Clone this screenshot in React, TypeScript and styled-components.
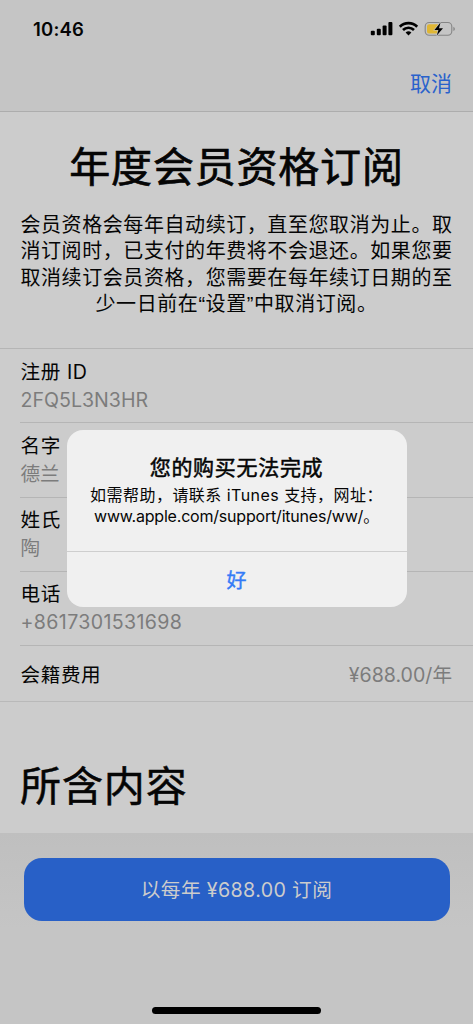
import React from 'react';
import styled, { createGlobalStyle } from 'styled-components';

const GlobalStyle = createGlobalStyle`
  *, *::before, *::after { box-sizing: border-box; }
  body {
    margin: 0;
    background: #cccccc;
    color: #050505;
    font-family: Inter, 'Noto Sans CJK SC', sans-serif;
    -webkit-font-smoothing: antialiased;
  }
  p, h1, h2, dl, dt, dd { margin: 0; font-weight: 400; }
  button { font: inherit; border: 0; padding: 0; background: none; }
`;

const Screen = styled.main`
  position: relative;
  width: 473px;
  height: 1024px;
  overflow: hidden;
  display: flex;
  flex-direction: column;
  background: #cccccc;
`;

const Header = styled.header`
  height: 112px;
  flex: none;
  background: #c5c5c5;
  border-bottom: 1px solid #adadad;
`;

const StatusBar = styled.div`
  display: flex;
  justify-content: space-between;
  align-items: center;
  height: 58px;
  padding: 0 17px 0 33px;
`;

const Clock = styled.span`
  font-size: 18.5px;
  font-weight: 600;
  letter-spacing: 0.2px;
`;

const StatusIcons = styled.svg`
  display: block;
  width: 86px;
  height: 18px;
`;

const NavBar = styled.nav`
  display: flex;
  justify-content: flex-end;
  align-items: center;
  height: 52px;
  padding-right: 21px;
`;

const CancelButton = styled.button`
  color: #2a62cc;
  font-size: 21px;
  line-height: 30px;
`;

const Intro = styled.section`
  height: 237px;
  flex: none;
  padding-top: 23px;
  text-align: center;
  border-bottom: 1px solid #b5b5b5;
`;

const Title = styled.h1`
  font-size: 41px;
  line-height: 64px;
  letter-spacing: 0.8px;
  -webkit-text-stroke: 0.7px currentColor;
`;

const Description = styled.p`
  margin-top: 12.5px;
  font-family: 'Liberation Sans', 'Noto Sans CJK SC', sans-serif;
  font-size: 20px;
  line-height: 26.5px;
  letter-spacing: 0.58px;
`;

const Line = styled.span`
  display: block;
  white-space: nowrap;
`;

const Details = styled.dl`
  flex: none;
  border-bottom: 1px solid #b9b9b9;
`;

const Row = styled.div<{ $inline?: boolean }>`
  display: flex;
  flex-direction: ${(p) => (p.$inline ? 'row' : 'column')};
  justify-content: ${(p) => (p.$inline ? 'space-between' : 'flex-start')};
  align-items: ${(p) => (p.$inline ? 'center' : 'flex-start')};
  height: ${(p) => (p.$inline ? '55px' : '74.3px')};
  margin-left: 20px;
  padding: ${(p) => (p.$inline ? '3px 21px 0 0.5px' : '8.5px 21px 0 0.5px')};
  border-bottom: ${(p) => (p.$inline ? '0' : '1px solid #b5b5b5')};
  font-size: 19.6px;
  line-height: 28px;
`;

const Label = styled.dt`
  letter-spacing: 0.6px;
`;

const Value = styled.dd<{ $spacing?: number }>`
  color: #7c7c7c;
  letter-spacing: ${(p) => p.$spacing ?? 0}px;
`;

const SectionTitle = styled.h2`
  flex: none;
  height: 130.5px;
  padding: 51.5px 20px 0;
  font-size: 41px;
  line-height: 64px;
  letter-spacing: 0.9px;
  -webkit-text-stroke: 0.5px currentColor;
`;

const Footer = styled.footer`
  flex: 1;
  display: flex;
  flex-direction: column;
  justify-content: space-between;
  align-items: center;
  padding: 25px 0 10px;
  background: linear-gradient(#bfbfbf, #c5c5c5 50%);
`;

const SubscribeButton = styled.button`
  width: 426px;
  height: 63px;
  padding-bottom: 2px;
  border-radius: 18px;
  background: #2860c7;
  color: #cccccc;
  font-size: 19.7px;
  letter-spacing: 0.35px;
`;

const HomeIndicator = styled.div`
  width: 169px;
  height: 7px;
  border-radius: 3.5px;
  background: #000000;
`;

const Overlay = styled.div`
  position: absolute;
  inset: 0;
  display: flex;
  justify-content: center;
  align-items: flex-start;
  padding-top: 430px;
`;

const Dialog = styled.div`
  width: 340px;
  height: 177px;
  display: flex;
  flex-direction: column;
  border-radius: 16px;
  overflow: hidden;
  background: #f0f0f0;
  text-align: center;
`;

const DialogBody = styled.div`
  flex: 1;
  padding-top: 24px;
`;

const DialogTitle = styled.h2`
  font-size: 21px;
  line-height: 28px;
  letter-spacing: 0.7px;
  -webkit-text-stroke: 0.5px currentColor;
`;

const DialogText = styled.p`
  margin-top: 3px;
  font-size: 16px;
  line-height: 20.6px;
`;

const MessageLine = styled(Line)`
  letter-spacing: 0.46px;
`;

const AddressLine = styled(Line)`
  letter-spacing: -0.2px;
`;

const DialogAction = styled.button`
  height: 56px;
  border-top: 1px solid #cecece;
  color: #347bf7;
  font-size: 20px;
  -webkit-text-stroke: 0.4px currentColor;
`;

const fields = [
  { label: '注册 ID', value: '2FQ5L3N3HR' },
  { label: '名字', value: '德兰' },
  { label: '姓氏', value: '陶' },
  { label: '电话', value: '+8617301531698', spacing: 0.36 },
];

const description = [
  '会员资格会每年自动续订，直至您取消为止。取',
  '消订阅时，已支付的年费将不会退还。如果您要',
  '取消续订会员资格，您需要在每年续订日期的至',
  '少一日前在“设置”中取消订阅。',
];

const StatusGlyphs = () => (
  <StatusIcons viewBox="0 0 86 18" aria-hidden="true">
    <g fill="#000">
      <rect x="0.8" y="10.7" width="4" height="4.6" rx="1" />
      <rect x="6.8" y="8.8" width="4" height="6.5" rx="1" />
      <rect x="12.6" y="5.5" width="4" height="9.8" rx="1" />
      <rect x="18.4" y="2" width="4" height="13.3" rx="1" />
    </g>
    <g fill="none" stroke="#000" strokeWidth="2.7">
      <path d="M29.8 6.7a12.4 12.4 0 0 1 17.4 0" />
      <path d="M33 10a7.9 7.9 0 0 1 11 0" />
    </g>
    <path d="M38.5 15.5l-2.9-2.9a4.1 4.1 0 0 1 5.8 0z" fill="#000" />
    <rect x="55.2" y="2.5" width="26.6" height="12.8" rx="4" fill="none" stroke="#858585" strokeWidth="1.1" />
    <path d="M83.4 6.7c2 .8 2 3.6 0 4.4z" fill="#858585" />
    <path d="M59.2 4.2H68v9.4h-8.8a2.2 2.2 0 0 1-2.2-2.2v-5a2.2 2.2 0 0 1 2.2-2.2z" fill="#dfb634" />
    <path
      d="M70.5 2.5L64.4 10h4l-1.6 5.6 6.2-7.4h-4z"
      fill="#000"
      stroke="#c5c5c5"
      strokeWidth="1.2"
      paintOrder="stroke"
    />
  </StatusIcons>
);

export default function App() {
  return (
    <>
      <GlobalStyle />
      <Screen>
        <Header>
          <StatusBar>
            <Clock>10:46</Clock>
            <StatusGlyphs />
          </StatusBar>
          <NavBar>
            <CancelButton>取消</CancelButton>
          </NavBar>
        </Header>
        <Intro>
          <Title>年度会员资格订阅</Title>
          <Description>
            {description.map((line) => (
              <Line key={line}>{line}</Line>
            ))}
          </Description>
        </Intro>
        <Details>
          {fields.map((field) => (
            <Row key={field.label}>
              <Label>{field.label}</Label>
              <Value $spacing={field.spacing}>{field.value}</Value>
            </Row>
          ))}
          <Row $inline>
            <Label>会籍费用</Label>
            <Value>¥688.00/年</Value>
          </Row>
        </Details>
        <SectionTitle>所含内容</SectionTitle>
        <Footer>
          <SubscribeButton>以每年 ¥688.00 订阅</SubscribeButton>
          <HomeIndicator />
        </Footer>
        <Overlay>
          <Dialog role="alertdialog">
            <DialogBody>
              <DialogTitle>您的购买无法完成</DialogTitle>
              <DialogText>
                <MessageLine>如需帮助，请联系 iTunes 支持，网址：</MessageLine>
                <AddressLine>www.apple.com/support/itunes/ww/。</AddressLine>
              </DialogText>
            </DialogBody>
            <DialogAction>好</DialogAction>
          </Dialog>
        </Overlay>
      </Screen>
    </>
  );
}
